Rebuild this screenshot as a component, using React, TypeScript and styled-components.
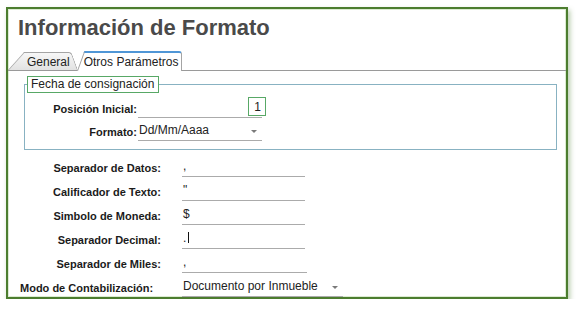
import React from "react";
import styled, { createGlobalStyle } from "styled-components";

const GlobalStyle = createGlobalStyle`
  html, body { margin: 0; padding: 0; background: #ffffff; }
  body { font-family: "Liberation Sans", Arial, sans-serif; }
`;

const Panel = styled.div`
  margin: 7px 0 0 6px;
  width: 562px;
  box-sizing: border-box;
  border: 2px solid #4c7d2f;
  box-shadow: inset 0 0 0 1px #dcebd2, 2px 3px 5px rgba(95, 140, 70, 0.45);
  background: #ffffff;
  display: flex;
  flex-direction: column;
`;

const Title = styled.h1`
  margin: 6px 0 0 10px;
  font: bold 22px/26px "Liberation Sans", Arial, sans-serif;
  color: #4a4a4a;
`;

const TabStrip = styled.div`
  display: flex;
  align-items: flex-end;
  margin-top: 10px;
  height: 19px;
  border-bottom: 1px solid #9a9a9a;
`;

const Tab = styled.div<{ $active?: boolean }>`
  position: relative;
  z-index: ${(p) => (p.$active ? 1 : 0)};
  box-sizing: border-box;
  height: ${(p) => (p.$active ? 20 : 18)}px;
  margin-bottom: ${(p) => (p.$active ? -1 : 0)}px;
  margin-left: ${(p) => (p.$active ? -1 : 0)}px;
  padding: ${(p) => (p.$active ? "3px 4px 0 7px" : "2px 8px 0 19px")};
  font: 12px/16px "Liberation Sans", Arial, sans-serif;
  color: #222;
  white-space: nowrap;

  &::before,
  &::after {
    content: "";
    position: absolute;
    z-index: -1;
    top: 0;
    bottom: 0;
    box-sizing: border-box;
    background: ${(p) =>
      p.$active ? "#ffffff" : "linear-gradient(#f7f7f7, #e2e2e2)"};
    border-top: ${(p) => (p.$active ? "2px solid #4f96d6" : "1px solid #a4a4a4")};
  }

  &::before {
    left: 0;
    width: 60%;
    border-left: 1px solid #a4a4a4;
    transform-origin: bottom left;
    transform: skewX(${(p) => (p.$active ? -20 : -42)}deg);
  }

  &::after {
    left: ${(p) => (p.$active ? 8 : 24)}px;
    right: 0;
    border-right: 1px solid #a4a4a4;
    border-top-right-radius: 3px;
    transform-origin: bottom right;
    transform: skewX(${(p) => (p.$active ? 0 : 20)}deg);
  }
`;

const Fieldset = styled.fieldset`
  margin: 5px 9px 0 16px;
  padding: 5px 0 8px 0;
  border: 1px solid #88b2c2;
  min-inline-size: auto;
`;

const Legend = styled.legend`
  margin-left: 2px;
  padding: 0 4px 0 3px;
  border: 1px solid #58a866;
  font: 12px/15px "Liberation Sans", Arial, sans-serif;
  color: #222;
`;

const FormGrid = styled.div<{ $label: number; $gap: number; $rowGap: number }>`
  display: grid;
  grid-template-columns: ${(p) => p.$label}px auto;
  column-gap: ${(p) => p.$gap}px;
  row-gap: ${(p) => p.$rowGap}px;
  justify-items: start;
`;

const Lower = styled(FormGrid)`
  margin-top: 7px;
`;

const Label = styled.label<{ $left?: boolean }>`
  justify-self: stretch;
  align-self: end;
  box-sizing: border-box;
  padding: 0 0 2px ${(p) => (p.$left ? 12 : 0)}px;
  text-align: ${(p) => (p.$left ? "left" : "right")};
  font: bold 11px/14px "Liberation Sans", Arial, sans-serif;
  color: #1b1b1b;
  white-space: nowrap;
`;

const Field = styled.div<{ $w: number }>`
  position: relative;
  display: flex;
  align-items: flex-start;
  box-sizing: border-box;
  width: ${(p) => p.$w}px;
  height: 20px;
  padding: 1px 0 0 1px;
  border-bottom: 1px solid #ababab;
  font: 12px/16px "Liberation Sans", Arial, sans-serif;
  color: #222;
  white-space: nowrap;
`;

const NumberField = styled(Field)`
  justify-content: flex-end;
  align-items: flex-end;
`;

const FocusBox = styled.span`
  box-sizing: border-box;
  display: flex;
  align-items: center;
  justify-content: flex-end;
  width: 18px;
  height: 19px;
  margin: 0 -4px 1px 0;
  padding-right: 4px;
  border: 1px solid #58a866;
  flex-shrink: 0;
`;

const Arrow = styled.span`
  margin: 8px 5px 0 auto;
  width: 0;
  height: 0;
  border-left: 3px solid transparent;
  border-right: 3px solid transparent;
  border-top: 3px solid #7a7a7a;
`;

const Caret = styled.span`
  display: inline-block;
  width: 1px;
  height: 11px;
  margin: 2px 0 0 2px;
  background: #111;
`;

type Row = { label: string; value?: string; caret?: boolean; select?: boolean; w: number; left?: boolean };

const rows: Row[] = [
  { label: "Separador de Datos:", value: ",", w: 123 },
  { label: "Calificador de Texto:", value: '"', w: 123 },
  { label: "Simbolo de Moneda:", value: "$", w: 123 },
  { label: "Separador Decimal:", value: ".", caret: true, w: 123 },
  { label: "Separador de Miles:", value: ",", w: 125 },
  { label: "Modo de Contabilización:", value: "Documento por Inmueble", select: true, w: 161, left: true },
];

export default function App() {
  return (
    <>
      <GlobalStyle />
      <Panel>
        <Title>Información de Formato</Title>
        <TabStrip>
          <Tab>General</Tab>
          <Tab $active>Otros Parámetros</Tab>
        </TabStrip>
        <Fieldset>
          <Legend>Fecha de consignación</Legend>
          <FormGrid $label={112} $gap={1} $rowGap={3}>
            <Label>Posición Inicial:</Label>
            <NumberField $w={124}>
              <FocusBox>1</FocusBox>
            </NumberField>
            <Label>Formato:</Label>
            <Field $w={124}>
              <span>Dd/Mm/Aaaa</span>
              <Arrow />
            </Field>
          </FormGrid>
        </Fieldset>
        <Lower $label={153} $gap={21} $rowGap={4}>
          {rows.map((r) => (
            <React.Fragment key={r.label}>
              <Label $left={r.left}>{r.label}</Label>
              <Field $w={r.w}>
                <span>{r.value}</span>
                {r.caret && <Caret />}
                {r.select && <Arrow />}
              </Field>
            </React.Fragment>
          ))}
        </Lower>
      </Panel>
    </>
  );
}
